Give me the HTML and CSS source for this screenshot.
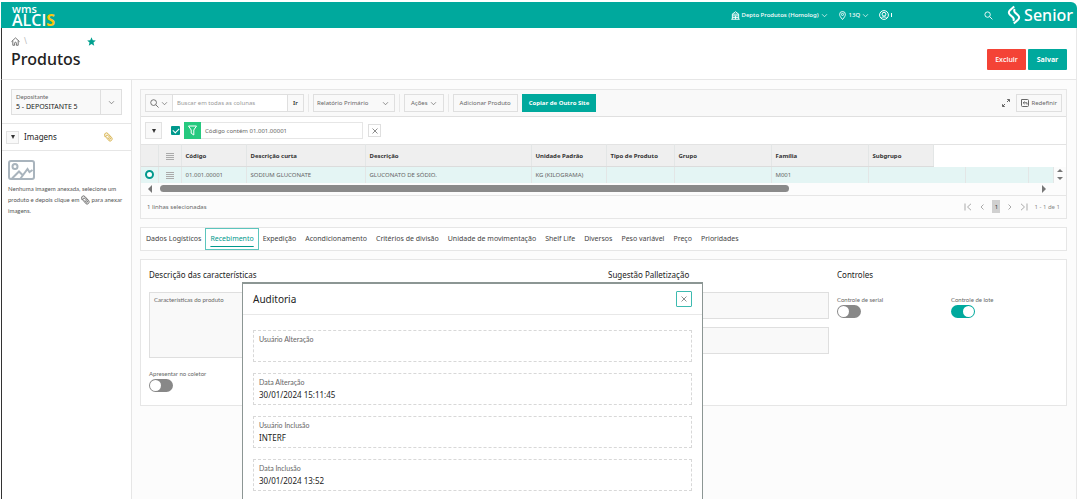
FILE: index.html
```html
<!DOCTYPE html>
<html lang="pt-BR">

<head>
    <meta charset="UTF-8">
    <title>Produtos</title>
    <link rel="stylesheet" href="styles.css">
</head>

<body>
    <svg class="defs" width="0" height="0">
        <symbol id="chevron" viewBox="0 0 10 10">
            <path d="M1.500 3.200 5 6.800 8.500 3.200" />
        </symbol>
        <symbol id="clip" viewBox="0 0 10 11">
            <path d="M1.300 5.600.8 3.400C.4 1.400 2.600.1 4.200 1.500L8.400 6c1.600 2-.4 4.800-2.600 3.800L2.600 6.200c-1.400-2 .6-3.600 2-2.400l2.400 2.800c.8 1.200-.4 2-1.200 1.200L4.200 5.800" />
        </symbol>
        <symbol id="lines" viewBox="0 0 8 8">
            <path d="M0 1.500h8M0 3.500h8M0 5.500h8M0 7.500h8" />
        </symbol>
        <symbol id="close" viewBox="0 0 8 8">
            <path d="M.7.7l6.600 6.600M7.300.7.7 7.300" />
        </symbol>
    </svg>

    <div class="page">
        <header class="topbar">
            <a class="logo" href="#"><span class="logo-wms">wms</span><span class="logo-alcis">ALCI<b>S</b></span></a>
            <nav class="topnav">
                <button class="nav-btn">
                    <svg class="icon nav-icon" viewBox="0 0 10 10"><path d="M1.500 3.500 5 .8l3.500 2.700zM1.500 3.500v5.700M8.500 3.500v5.700M.3 9.200h9.400M1.500 5.400h7M1.500 7.300h7M5 5.400v3.800" /></svg>
                    Depto Produtos (Homolog)
                    <svg class="icon nav-chevron"><use href="#chevron" /></svg>
                </button>
                <button class="nav-btn">
                    <svg class="icon nav-icon" viewBox="0 0 10 10"><path d="M5 9.500C3 7 1.800 5.500 1.800 3.800a3.200 3.200 0 0 1 6.400 0C8.200 5.500 7 7 5 9.500z" /><circle cx="5" cy="3.800" r="1.200" /></svg>
                    13Q
                    <svg class="icon nav-chevron"><use href="#chevron" /></svg>
                </button>
                <button class="nav-btn" aria-label="Usuário">
                    <svg class="icon user-icon" viewBox="0 0 10 10"><circle cx="5" cy="5" r="4.400" /><circle cx="5" cy="4.200" r="1.900" /><path d="M2.200 8.200C3 6.400 7 6.400 7.800 8.200" /></svg>
                    <span class="user-mark"></span>
                </button>
            </nav>
            <button class="nav-btn search-btn" aria-label="Pesquisar">
                <svg class="icon nav-icon" viewBox="0 0 10 10"><circle cx="4" cy="4" r="3" /><path d="M6.300 6.300 9.300 9.300" /></svg>
            </button>
            <a class="senior" href="#">
                <svg class="senior-mark" viewBox="0 0 14 20"><path d="M7.200 1.500 3 5.200C1.400 6.800 1.500 8.400 3 9.800l3 2.700c1 1.100 1 2.300.2 3.400" /><path d="M6.800 18.500 11 14.800c1.600-1.600 1.500-3.200 0-4.600L8 7.500C7 6.400 7 5.200 7.800 4.100" /></svg>
                Senior
            </a>
        </header>

        <div class="titlebar">
            <div>
                <div class="breadcrumb">
                    <a href="#" aria-label="Início"><svg class="icon home-icon" viewBox="0 0 10 10"><path d="M.5 5.200 5 1l4.500 4.200M2 4v5.200h2V6.800c0-1.400 2-1.400 2 0v2.400h2V4" /></svg></a>
                    <span class="slash">\</span>
                    <svg class="star" viewBox="0 0 10 10"><path d="M5 .4 6.400 3.600 9.800 3.900 7.200 6.200 8 9.600 5 7.800 2 9.600 2.800 6.200.2 3.900 3.600 3.600z" /></svg>
                </div>
                <h1>Produtos</h1>
            </div>
            <div class="title-actions">
                <button class="btn btn-danger">Excluir</button>
                <button class="btn btn-primary">Salvar</button>
            </div>
        </div>

        <div class="content">
            <aside class="sidebar">
                <div class="depositante">
                    <div class="lov">
                        <div class="lov-text">
                            <label for="depositante">Depositante</label>
                            <input id="depositante" type="text" value="5 - DEPOSITANTE 5">
                        </div>
                        <button class="lov-btn" aria-label="Abrir lista"><svg class="icon nav-chevron"><use href="#chevron" /></svg></button>
                    </div>
                </div>
                <div class="side-head">
                    <button class="collapse-btn" aria-label="Recolher"><span class="caret"></span></button>
                    <h2>Imagens</h2>
                    <svg class="icon clip clip-gold"><use href="#clip" /></svg>
                </div>
                <div class="side-body">
                    <svg class="icon picture" viewBox="0 0 27 20"><rect x="1" y="1" width="25" height="18" rx="2" /><circle cx="7" cy="6.500" r="2.500" /><path d="M4 18.500 11 11.500l4 4M12.500 18.500 19.500 9l2 3 3-2" /></svg>
                    <p>Nenhuma imagem anexada, selecione um produto e depois clique em <svg class="icon clip"><use href="#clip" /></svg> para anexar imagens.</p>
                </div>
            </aside>

            <main class="main">
                <section class="grid-region">
                    <div class="toolbar">
                        <div class="search-group">
                            <button class="tool search-tool" aria-label="Selecionar coluna">
                                <svg class="icon search-icon" viewBox="0 0 10 10"><circle cx="4" cy="4" r="3.200" /><path d="M6.400 6.400 9.500 9.500" /></svg>
                                <svg class="icon nav-chevron"><use href="#chevron" /></svg>
                            </button>
                            <input class="search-input" type="text" placeholder="Buscar em todas as colunas" aria-label="Buscar">
                            <button class="tool go">Ir</button>
                        </div>
                        <div class="tool-group">
                            <div class="select-wrap">
                                <select class="tool" aria-label="Relatório">
                                    <option>Relatório Primário</option>
                                </select>
                                <svg class="icon nav-chevron"><use href="#chevron" /></svg>
                            </div>
                        </div>
                        <div class="tool-group">
                            <button class="tool">Ações <svg class="icon nav-chevron"><use href="#chevron" /></svg></button>
                        </div>
                        <div class="tool-group">
                            <button class="tool">Adicionar Produto</button>
                            <button class="tool btn-primary">Copiar de Outro Site</button>
                        </div>
                        <div class="tool-end">
                            <button class="plain" aria-label="Maximizar"><svg class="icon small-icon" viewBox="0 0 8 8"><path d="M5 3 7.400.6M5.200.5h2.300v2.300M3 5 .6 7.400M.5 5.200v2.300h2.300" /></svg></button>
                            <button class="tool"><svg class="icon small-icon" viewBox="0 0 8 8"><path d="M2 .5h4.500a1 1 0 0 1 1 1v5a1 1 0 0 1-1 1h-5a1 1 0 0 1-1-1V.5H2M6 5.500V3.800H2.500M3.500 2.500 2.200 3.800l1.300 1.300" /></svg> Redefinir</button>
                        </div>
                    </div>

                    <div class="filters">
                        <button class="collapse-btn" aria-label="Recolher filtros"><span class="caret"></span></button>
                        <input class="check" type="checkbox" aria-label="Filtro ativo" checked>
                        <div class="filter">
                            <svg class="funnel" viewBox="0 0 17 17"><path d="M4.500 4h8L9.800 8v5L7.200 11.200V8z" /></svg>
                            <button class="filter-text">Código contém 01.001.00001</button>
                        </div>
                        <button class="remove" aria-label="Remover filtro"><svg class="icon close"><use href="#close" /></svg></button>
                    </div>

                    <table class="grid">
                        <colgroup>
                            <col class="w-sel"><col class="w-menu"><col class="w-cod"><col class="w-curta"><col class="w-desc"><col class="w-uni"><col class="w-tipo"><col class="w-grupo"><col class="w-grupo"><col class="w-sub"><col class="w-extra"><col class="w-last"><col><col class="w-spin">
                        </colgroup>
                        <thead>
                            <tr>
                                <th></th>
                                <th><svg class="icon lines"><use href="#lines" /></svg></th>
                                <th>Código</th>
                                <th>Descrição curta</th>
                                <th>Descrição</th>
                                <th>Unidade Padrão</th>
                                <th>Tipo de Produto</th>
                                <th>Grupo</th>
                                <th>Família</th>
                                <th>Subgrupo</th>
                                <td colspan="4"></td>
                            </tr>
                        </thead>
                        <tbody>
                            <tr>
                                <td><input class="row-radio" type="radio" name="linha" aria-label="Selecionar linha" checked></td>
                                <td><svg class="icon lines"><use href="#lines" /></svg></td>
                                <td>01.001.00001</td>
                                <td>SODIUM GLUCONATE</td>
                                <td>GLUCONATO DE SÓDIO.</td>
                                <td>KG (KILOGRAMA)</td>
                                <td></td>
                                <td></td>
                                <td>M001</td>
                                <td colspan="2"></td>
                                <td></td>
                                <td></td>
                                <td class="spin"><span class="tri tri-up"></span><span class="tri tri-down"></span></td>
                            </tr>
                        </tbody>
                    </table>

                    <div class="hscroll">
                        <span class="tri tri-left"></span>
                        <div class="track"><div class="thumb"></div></div>
                        <span class="tri tri-right"></span>
                    </div>

                    <div class="grid-footer">
                        <span>1 linhas selecionadas</span>
                        <div class="pager">
                            <button class="plain" aria-label="Primeira"><svg class="icon small-icon" viewBox="0 0 8 8"><path d="M1 .5v7M7 .8 3.500 4 7 7.200" /></svg></button>
                            <button class="plain" aria-label="Anterior"><svg class="icon small-icon" viewBox="0 0 8 8"><path d="M5.500 1.500 3 4l2.500 2.500" /></svg></button>
                            <button class="plain current">1</button>
                            <button class="plain" aria-label="Próxima"><svg class="icon small-icon" viewBox="0 0 8 8"><path d="M2.500 1.500 5 4 2.500 6.500" /></svg></button>
                            <button class="plain" aria-label="Última"><svg class="icon small-icon" viewBox="0 0 8 8"><path d="M7 .5v7M1 .8 4.500 4 1 7.200" /></svg></button>
                            <span class="range">1 - 1 de 1</span>
                        </div>
                    </div>
                </section>

                <nav class="tabs">
                    <a href="#">Dados Logísticos</a>
                    <a href="#" class="active">Recebimento</a>
                    <a href="#">Expedição</a>
                    <a href="#">Acondicionamento</a>
                    <a href="#">Critérios de divisão</a>
                    <a href="#">Unidade de movimentação</a>
                    <a href="#">Shelf Life</a>
                    <a href="#">Diversos</a>
                    <a href="#">Peso variável</a>
                    <a href="#">Preço</a>
                    <a href="#">Prioridades</a>
                </nav>

                <section class="panel">
                    <div>
                        <h3>Descrição das características</h3>
                        <div class="textarea-field">
                            <label for="caract">Características do produto</label>
                            <textarea id="caract"></textarea>
                        </div>
                        <div class="switch-field coletor">
                            <label for="coletor">Apresentar no coletor</label>
                            <input class="switch" id="coletor" type="checkbox">
                        </div>
                    </div>
                    <div>
                        <h3>Sugestão Palletização</h3>
                        <div class="stack">
                            <input class="field" type="text" aria-label="Lastro">
                            <input class="field" type="text" aria-label="Altura">
                        </div>
                    </div>
                    <div>
                        <h3>Controles</h3>
                        <div class="switches">
                            <div class="switch-field">
                                <label for="serial">Controle de serial</label>
                                <input class="switch" id="serial" type="checkbox">
                            </div>
                            <div class="switch-field">
                                <label for="lote">Controle de lote</label>
                                <input class="switch" id="lote" type="checkbox" checked>
                            </div>
                        </div>
                    </div>
                </section>
            </main>
        </div>
    </div>

    <div class="dialog" role="dialog" aria-labelledby="dialog-title">
        <div class="dialog-head">
            <h2 id="dialog-title">Auditoria</h2>
            <button class="dialog-close" aria-label="Fechar"><svg class="icon close"><use href="#close" /></svg></button>
        </div>
        <div class="dialog-body">
            <div class="audit">
                <label for="usr-alt">Usuário Alteração</label>
                <input id="usr-alt" type="text" readonly>
            </div>
            <div class="audit">
                <label for="dt-alt">Data Alteração</label>
                <input id="dt-alt" type="text" value="30/01/2024 15:11:45" readonly>
            </div>
            <div class="audit">
                <label for="usr-inc">Usuário Inclusão</label>
                <input id="usr-inc" type="text" value="INTERF" readonly>
            </div>
            <div class="audit">
                <label for="dt-inc">Data Inclusão</label>
                <input id="dt-inc" type="text" value="30/01/2024 13:52" readonly>
            </div>
        </div>
    </div>
</body>

</html>
```
FILE: styles.css
```css
* {
    box-sizing: border-box;
}

body {
    margin: 0;
    font-family: "Noto Sans", "Open Sans", sans-serif;
    font-size: 6px;
    line-height: 10px;
    color: #666;
    background: #fff;
    overflow: hidden;
}

h1, h2, h3, p {
    margin: 0;
    font-weight: normal;
    color: #222;
}

button, input, select, textarea {
    margin: 0;
    padding: 0;
    border: 0;
    border-radius: 0;
    background: none;
    font: inherit;
    color: inherit;
    outline: none;
    appearance: none;
}

button {
    cursor: pointer;
}

a {
    color: inherit;
    text-decoration: none;
}

label {
    font-family: Lato, "Open Sans", sans-serif;
    color: #666;
}

.defs {
    position: absolute;
}

.icon {
    flex: none;
    fill: none;
    stroke: currentColor;
    stroke-width: 1;
}

.small-icon {
    width: 8px;
    height: 8px;
}

.page {
    display: flex;
    flex-direction: column;
    min-height: 100vh;
    margin: 0 1px;
    padding-top: 2px;
}

/* top bar */
.topbar {
    display: flex;
    align-items: center;
    height: 26px;
    padding: 0 4px 0 11px;
    border-top-right-radius: 6px;
    background: #00a99d;
    color: #fff;
}

.logo {
    display: flex;
    flex-direction: column;
    font-family: "Open Sans", sans-serif;
    font-weight: 600;
}

.logo-wms {
    font-size: 11px;
    line-height: 10px;
}

.logo-alcis {
    font-size: 16px;
    line-height: 13px;
}

.logo-alcis b {
    color: #fdc70c;
    font-weight: 700;
}

.topnav {
    display: flex;
    gap: 10px;
    margin-left: auto;
}

.nav-btn {
    display: flex;
    align-items: center;
    gap: 2px;
    font-weight: 500;
}

.nav-icon {
    width: 9px;
    height: 9px;
}

.user-icon {
    width: 10px;
    height: 10px;
}

.user-mark {
    width: 1px;
    height: 4px;
    background: #fff;
}

.nav-chevron {
    width: 7px;
    height: 7px;
}

.search-btn {
    margin: 0 14px 0 92px;
}

.senior {
    display: flex;
    align-items: center;
    gap: 3px;
    font-size: 16px;
    font-weight: 500;
    line-height: 24px;
}

.senior-mark {
    width: 14px;
    height: 20px;
    fill: none;
    stroke: #fff;
    stroke-width: 2;
}

/* title */
.titlebar {
    display: flex;
    justify-content: space-between;
    height: 52px;
    padding: 8px 9px 0;
    border-left: 1px solid #333;
    border-right: 1px solid #e8e8e8;
    border-bottom: 1px solid #e6e6e6;
}

.breadcrumb {
    display: flex;
    align-items: center;
    gap: 4px;
    height: 10px;
}

.breadcrumb a {
    display: flex;
}

.home-icon {
    width: 9px;
    height: 9px;
    color: #666;
}

.slash {
    font-size: 8px;
    color: #bbb;
}

.star {
    width: 9px;
    height: 9px;
    margin-left: 56px;
    fill: #00a08f;
}

h1 {
    font-size: 16px;
    font-weight: 500;
    line-height: 26px;
}

.title-actions {
    display: flex;
    gap: 2px;
    padding-top: 13px;
}

.btn {
    width: 39px;
    height: 21px;
    border-radius: 1px;
    font-family: "Open Sans", sans-serif;
    font-weight: 600;
    font-size: 7px;
}

.btn-danger {
    background: #f44336;
    color: #fff;
}

.btn-primary {
    background: #00a99d;
    color: #fff;
    font-weight: 700;
}

.content {
    display: flex;
    flex: 1;
    border-left: 1px solid #333;
    border-right: 1px solid #e8e8e8;
}

/* sidebar */
.sidebar {
    flex: none;
    width: 130px;
    border-right: 1px solid #e6e6e6;
}

.depositante {
    padding: 9px 9px 8px;
    border-bottom: 1px solid #e6e6e6;
}

.lov {
    display: flex;
    height: 26px;
    border: 1px solid #dfdfdf;
    background: #f9f9f9;
}

.lov-text {
    display: flex;
    flex: 1;
    flex-direction: column;
    min-width: 0;
    padding: 2px 4px;
}

.lov-text input {
    width: 100%;
    font-size: 7px;
    color: #222;
}

.lov-btn {
    display: flex;
    align-items: center;
    justify-content: center;
    width: 21px;
    border-left: 1px solid #dfdfdf;
}

.side-head {
    display: flex;
    align-items: center;
    height: 27px;
    padding: 0 18px 0 4px;
    border-bottom: 1px solid #e6e6e6;
}

.side-head h2 {
    flex: 1;
    margin-left: 5px;
    font-size: 8px;
}

.collapse-btn {
    display: flex;
    align-items: center;
    justify-content: center;
    width: 13px;
    height: 13px;
    border: 1px solid #e2e2e2;
    background: #f9f9f9;
}

.caret {
    border: 2px solid transparent;
    border-top: 4px solid #333;
    border-bottom: 0;
}

.clip {
    width: 9px;
    height: 10px;
    vertical-align: middle;
}

.clip-gold {
    color: #d0a52c;
}

.side-body {
    padding: 9px 3px 9px 6px;
}

.picture {
    display: block;
    width: 27px;
    height: 20px;
    color: #a9b4bd;
    stroke-width: 2;
}

.side-body p {
    margin-top: 3px;
    font-family: Lato, "Open Sans", sans-serif;
    line-height: 11px;
    color: #555;
}

/* main */
.main {
    display: flex;
    flex: 1;
    flex-direction: column;
    gap: 8px;
    min-width: 0;
    padding: 9px 9px 0 8px;
    background: #fcfcfc;
}

.grid-region, .tabs, .panel {
    border: 1px solid #e6e6e6;
}

.toolbar {
    display: flex;
    align-items: center;
    height: 27px;
    padding: 0 4px;
    border-bottom: 1px solid #e0e0e0;
    background: #f9f9f9;
}

.tool {
    display: flex;
    align-items: center;
    justify-content: center;
    gap: 2px;
    height: 18px;
    padding: 0 6px;
    border: 1px solid #dfdfdf;
    background: #f9f9f9;
}

.tool.btn-primary {
    border-color: #00a99d;
    background: #00a99d;
    font-family: "Open Sans", sans-serif;
}

.search-group {
    display: flex;
}

.search-tool {
    width: 28px;
}

.search-icon {
    width: 9px;
    height: 9px;
}

.search-input {
    width: 114px;
    height: 18px;
    padding: 0 4px;
    border: 1px solid #dfdfdf;
    border-width: 1px 0;
    background: #fff;
}

.search-input::placeholder {
    color: #999;
}

.go {
    width: 17px;
    padding: 0;
    color: #333;
    font-weight: 600;
}

.tool-group {
    display: flex;
    gap: 4px;
    margin-left: 4px;
    padding-left: 4px;
    border-left: 1px solid #e8e8e8;
}

.select-wrap {
    display: grid;
    align-items: center;
    width: 82px;
}

.select-wrap > * {
    grid-area: 1 / 1;
}

.select-wrap .tool {
    width: 100%;
    padding: 0 3px;
}

.select-wrap .icon {
    justify-self: end;
    margin-right: 6px;
    pointer-events: none;
}

.tool-end {
    display: flex;
    align-items: center;
    gap: 6px;
    margin-left: auto;
}

.tool-end .tool {
    padding: 0 4px;
}

.plain {
    display: flex;
    align-items: center;
    justify-content: center;
}

.filters {
    display: flex;
    align-items: center;
    height: 27px;
    padding: 0 4px;
    background: #fff;
}

.filters .collapse-btn {
    width: 17px;
    height: 17px;
}

.check {
    display: flex;
    align-items: center;
    justify-content: center;
    width: 9px;
    height: 9px;
    margin: 0 4px 0 9px;
    border-radius: 1px;
    background: #00998d;
}

.check:checked::before {
    content: "";
    width: 5px;
    height: 3px;
    margin-bottom: 1px;
    border: solid #fff;
    border-width: 0 0 1px 1px;
    transform: rotate(-45deg);
}

.filter {
    display: flex;
}

.funnel {
    width: 17px;
    height: 17px;
    background: #26c97f;
    fill: none;
    stroke: #fff;
}

.filter-text {
    width: 162px;
    height: 17px;
    padding: 0 4px;
    border: 1px solid #e6e6e6;
    border-left: 0;
    text-align: left;
}

.remove {
    display: flex;
    align-items: center;
    justify-content: center;
    width: 13px;
    height: 13px;
    margin-left: 5px;
    border: 1px solid #dfdfdf;
}

.close {
    width: 6px;
    height: 6px;
}

/* grid */
.grid {
    width: 100%;
    border-collapse: collapse;
    table-layout: fixed;
}

.grid th, .grid td {
    padding: 0 4px;
    border-right: 1px solid #e3e6e6;
    text-align: left;
    white-space: nowrap;
}

.grid th {
    height: 22px;
    border-top: 1px solid #e3e3e3;
    border-bottom: 1px solid #dcdcdc;
    background: #efefef;
    color: #333;
    font-weight: 700;
}

.grid thead td {
    border: 0;
    border-top: 1px solid #e3e3e3;
    background: #fff;
}

.grid tbody td {
    height: 16px;
    background: #e4f5f4;
}

.w-sel { width: 17px; }
.w-menu { width: 23px; }
.w-cod { width: 65px; }
.w-curta { width: 119px; }
.w-desc { width: 166px; }
.w-uni { width: 75px; }
.w-tipo { width: 68px; }
.w-grupo { width: 97px; }
.w-sub { width: 65px; }
.w-extra { width: 32px; }
.w-last { width: 63px; }
.w-spin { width: 13px; }

.lines {
    display: block;
    width: 8px;
    height: 8px;
    margin: 0 auto;
    color: #aaa;
}

.row-radio {
    display: block;
    width: 9px;
    height: 9px;
    border: 2px solid #00998d;
    border-radius: 50%;
    background: #fff;
}

.grid .spin {
    padding: 0 3px;
    border: 0;
    background: #fcfcfc;
}

.tri {
    display: block;
    width: 0;
    height: 0;
    border: 3px solid transparent;
}

.tri-up {
    margin-bottom: 5px;
    border-top: 0;
    border-bottom-color: #777;
}

.tri-down {
    border-bottom: 0;
    border-top-color: #777;
}

.tri-left {
    border-width: 4px;
    border-left: 0;
    border-right-color: #777;
}

.tri-right {
    border-width: 4px;
    border-right: 0;
    border-left-color: #777;
}

.hscroll {
    display: flex;
    align-items: center;
    gap: 8px;
    height: 13px;
    padding: 0 20px 0 7px;
    border-bottom: 1px solid #e6e6e6;
}

.track {
    flex: 1;
}

.thumb {
    width: 72%;
    height: 7px;
    border-radius: 4px;
    background: #8a8a8a;
}

.grid-footer {
    display: flex;
    align-items: center;
    justify-content: space-between;
    height: 22px;
    padding: 0 6px;
}

.pager {
    display: flex;
    align-items: center;
    gap: 6px;
    color: #aaa;
}

.current {
    width: 8px;
    height: 13px;
    background: #d0d0d0;
    color: #333;
}

.range {
    color: #888;
}

/* tabs */
.tabs {
    display: flex;
    height: 24px;
    background: #fff;
    font-size: 7px;
    line-height: 20px;
    color: #444;
}

.tabs a {
    height: 22px;
    margin-right: -1px;
    padding: 0 4px;
    border: 1px solid transparent;
    white-space: nowrap;
}

.tabs .active {
    border-color: #5cc5bd;
    color: #00998d;
    text-decoration: underline;
    text-underline-offset: 5px;
}

/* panel */
.panel {
    display: grid;
    grid-template-columns: 1fr 221px 221px;
    gap: 8px;
    min-height: 147px;
    padding: 9px 8px;
    background: #fff;
}

h3 {
    margin-bottom: 11px;
    font-size: 8px;
    line-height: 12px;
}

.textarea-field {
    display: flex;
    flex-direction: column;
    height: 66px;
    padding: 2px 4px;
    border: 1px solid #dfdfdf;
    background: #f9f9f9;
}

.textarea-field textarea {
    flex: 1;
    resize: none;
}

.stack {
    display: flex;
    flex-direction: column;
    gap: 8px;
}

.field {
    height: 27px;
    border: 1px solid #dfdfdf;
    background: #f9f9f9;
}

.switches {
    display: grid;
    grid-template-columns: 1fr 1fr;
    gap: 7px;
    padding-top: 3px;
}

.switch-field {
    display: flex;
    flex-direction: column;
}

.coletor {
    margin-top: 11px;
}

.switch {
    width: 24px;
    height: 13px;
    padding: 1px;
    border-radius: 7px;
    background: #888;
}

.switch::before {
    content: "";
    display: block;
    width: 11px;
    height: 11px;
    border-radius: 50%;
    background: #fff;
}

.switch:checked {
    background: #00a99d;
}

.switch:checked::before {
    margin-left: auto;
}

/* dialog over the page */
.dialog {
    position: fixed;
    top: 282px;
    bottom: 0;
    left: 242px;
    width: 461px;
    border: 1px solid #8c9694;
    border-width: 2px 1px 0;
    background: #fff;
    overflow: hidden;
}

.dialog-head {
    display: flex;
    align-items: center;
    justify-content: space-between;
    height: 31px;
    padding: 0 10px;
    border-bottom: 1px solid #e8e8e8;
}

.dialog-head h2 {
    font-size: 10px;
}

.dialog-close {
    display: flex;
    align-items: center;
    justify-content: center;
    width: 16px;
    height: 16px;
    border: 1px solid #3dbab0;
    border-radius: 1px;
}

.dialog-body {
    display: flex;
    flex-direction: column;
    gap: 11px;
    padding: 15px 10px;
}

.audit {
    display: flex;
    flex-direction: column;
    height: 32px;
    padding: 3px 5px;
    border: 1px dashed #d8d8d8;
}

.audit label {
    font-size: 7px;
}

.audit input {
    height: 14px;
    font-size: 8px;
    color: #222;
}
```
